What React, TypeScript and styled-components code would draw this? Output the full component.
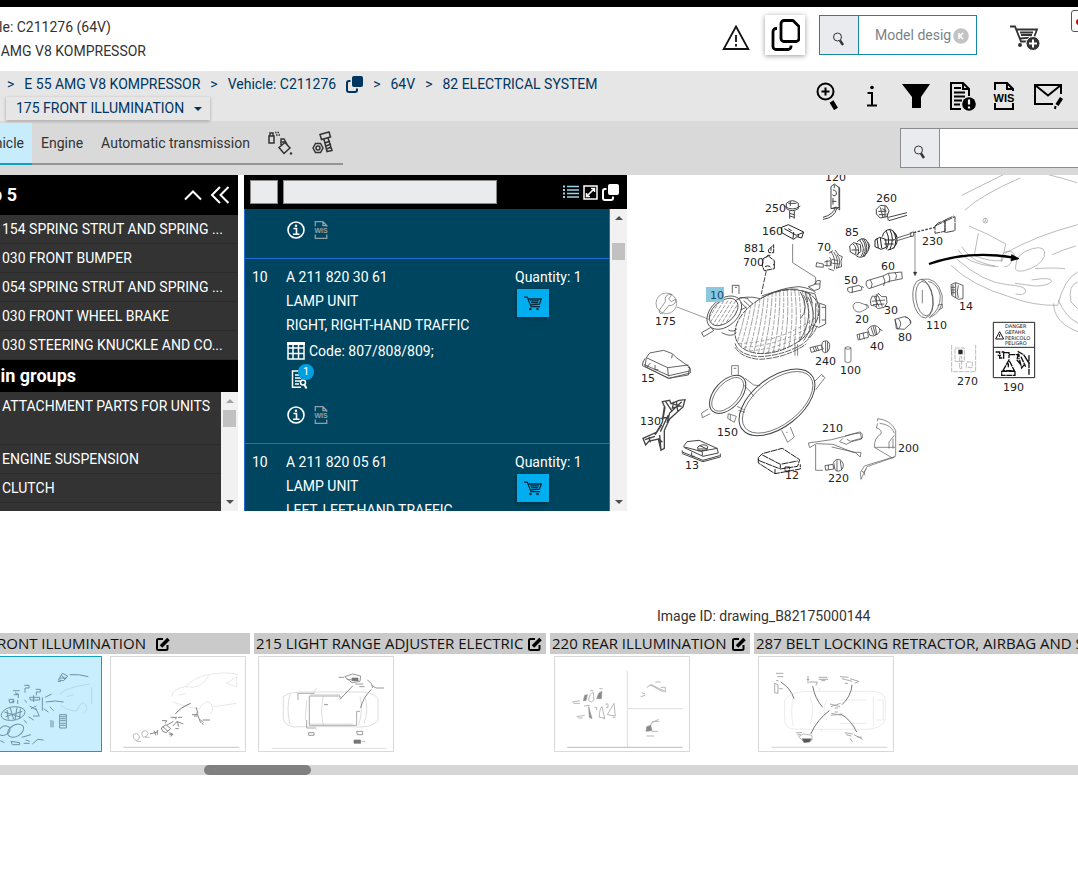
import React from "react";
import styled, { createGlobalStyle } from "styled-components";

const GlobalStyle = createGlobalStyle`
  * { box-sizing: border-box; }
  body {
    margin: 0;
    background: #fff;
    color: #333;
    font: 14px/24px Roboto, "Liberation Sans", sans-serif;
    overflow-x: hidden;
  }
  button, input { font: inherit; color: inherit; margin: 0; }
  button { border: 0; padding: 0; background: none; cursor: pointer; }
  svg { display: block; flex: none; }
  h2, p, ul { margin: 0; padding: 0; }
  ul { list-style: none; }
`;

const Page = styled.div`
  width: 100%;
  overflow: hidden;
`;

const TopStrip = styled.div`
  height: 7px;
  background: #000;
`;

const TailText = styled.span<{ $width: number }>`
  display: flex;
  justify-content: flex-end;
  flex: none;
  width: ${(p) => p.$width}px;
  overflow: hidden;
  white-space: nowrap;
`;

/* ---------- header ---------- */

const Header = styled.header`
  display: flex;
  justify-content: space-between;
  height: 64px;
`;

const VehicleInfo = styled.div`
  padding-top: 8px;
`;

const HeaderTools = styled.div`
  display: flex;
  align-items: flex-start;
  padding-top: 8px;
`;

const IconButton = styled.button<{ $width: number; $gap?: number; $height?: number }>`
  display: flex;
  align-items: center;
  justify-content: center;
  flex: none;
  width: ${(p) => p.$width}px;
  height: ${(p) => p.$height ?? 40}px;
  margin-right: ${(p) => p.$gap ?? 0}px;
`;

const RaisedButton = styled(IconButton)`
  background: #fff;
  color: #000;
  box-shadow: 0 1px 5px rgba(0, 0, 0, 0.4);
`;

const SearchGroup = styled.form<{ $accent: string; $width: string }>`
  display: flex;
  position: relative;
  flex: none;
  width: ${(p) => p.$width};
  height: 40px;
  border: 1px solid ${(p) => p.$accent};
  background: #fff;
`;

const SearchButton = styled.button<{ $accent: string }>`
  display: flex;
  align-items: center;
  justify-content: center;
  width: 39px;
  padding-top: 8px;
  border-right: 1px solid ${(p) => p.$accent};
  background: #e9ebef;
`;

const SearchInput = styled.input`
  flex: 1;
  min-width: 0;
  padding: 0 24px 0 16px;
  border: 0;
  outline: 0;
  background: transparent;
  &::placeholder { color: #7b8388; opacity: 1; }
`;

const ClearButton = styled.button`
  position: absolute;
  right: 7px;
  top: 12px;
`;

const EdgeBox = styled.button`
  display: flex;
  width: 20px;
  height: 22px;
  margin: -5px -13px 0 0;
  padding: 8px 0 0 4px;
  border: 1px solid #555;
  border-radius: 3px;
`;

const EdgeDot = styled.span`
  width: 6px;
  height: 6px;
  border-radius: 3px;
  background: #c00;
`;

/* ---------- breadcrumb ---------- */

const CrumbBar = styled.nav`
  display: flex;
  justify-content: space-between;
  height: 50px;
  background: #e6e6e6;
  color: #00355f;
`;

const CrumbRow = styled.div`
  display: flex;
  align-items: center;
  height: 26px;
  padding-left: 7px;
  gap: 10px;
`;

const CrumbLink = styled.a`
  color: inherit;
  text-decoration: none;
  white-space: nowrap;
`;

const GroupMenu = styled.button`
  display: flex;
  align-items: center;
  gap: 10px;
  height: 23px;
  margin-left: 6px;
  padding: 0 8px 2px 10px;
  box-shadow: 0 1px 3px rgba(0, 0, 0, 0.3);
`;

const MenuCaret = styled.span`
  margin-top: 2px;
  border: 4px solid transparent;
  border-bottom-width: 0;
  border-top-color: #00355f;
`;

const CrumbTools = styled.div`
  display: flex;
  align-items: center;
  flex: none;
  padding-right: 8px;
  color: #000;
`;

/* ---------- tabs ---------- */

const TabBar = styled.div`
  display: flex;
  justify-content: space-between;
  height: 54px;
  background: #d9d9d9;
`;

const Tabs = styled.div`
  display: flex;
  align-items: stretch;
  height: 42px;
  margin-top: 2px;
  border-bottom: 2px solid #949494;
`;

const Tab = styled.button<{ $active?: boolean }>`
  display: flex;
  align-items: center;
  padding: 0 9px 2px;
  margin-bottom: -2px;
  ${(p) => p.$active && `
    padding: 0 8px 0 0;
    background: #c7ecfc;
    border-bottom: 2px solid #149fcb;
  `}
`;

const TabSearch = styled.div`
  margin-top: 7px;
  flex: none;
  width: 178px;
`;

/* ---------- panels ---------- */

const Panels = styled.main`
  display: flex;
  align-items: flex-start;
`;

const GroupPanel = styled.aside`
  flex: none;
  width: 238px;
  height: 336px;
  margin-right: 6px;
  overflow: hidden;
  background: #333;
  color: #fff;
`;

const PanelHeading = styled.div<{ $height: number }>`
  display: flex;
  align-items: center;
  height: ${(p) => p.$height}px;
  padding-right: 6px;
  background: #000;
  h2 { font-size: 18px; line-height: 24px; font-weight: 700; flex: 1; }
`;

const GroupItem = styled.li<{ $lines?: number }>`
  height: ${(p) => (p.$lines === 2 ? 53 : 29)}px;
  padding: 2px 0 0 2px;
  border-bottom: 1px solid #2b2b2b;
  white-space: nowrap;
`;

const ScrollArea = styled.div<{ $height: number }>`
  display: flex;
  height: ${(p) => p.$height}px;
  overflow: hidden;
`;

const ScrollBody = styled.div`
  flex: 1;
  min-width: 0;
  overflow: hidden;
`;

const ScrollTrack = styled.div`
  display: flex;
  flex-direction: column;
  align-items: center;
  justify-content: space-between;
  flex: none;
  width: 17px;
  padding: 7px 0;
  background: #f1f1f1;
`;

const ScrollHandle = styled.div<{ $offset: number }>`
  width: 13px;
  height: 17px;
  margin: ${(p) => p.$offset}px 0 auto;
  background: #c1c1c1;
`;

const Arrow = styled.span<{ $down?: boolean; $faded?: boolean }>`
  border: 4px solid transparent;
  ${(p) => (p.$down ? "border-bottom-width: 0; border-top-color" : "border-top-width: 0; border-bottom-color")}:
    ${(p) => (p.$faded ? "#a3a3a3" : "#505050")};
`;

const PartsPanel = styled.section`
  flex: none;
  width: 383px;
`;

const PartsHeader = styled.div`
  display: flex;
  align-items: center;
  gap: 5px;
  height: 34px;
  padding: 0 8px 0 6px;
  background: #000;
  color: #fff;
`;

const FilterInput = styled.input<{ $width: number }>`
  flex: none;
  width: ${(p) => p.$width}px;
  height: 24px;
  border: 1px solid #8a8a8a;
  background: #e9ebed;
  color: #333;
`;

const HeaderIcons = styled.div`
  display: flex;
  align-items: center;
  gap: 4px;
  margin-left: auto;
`;

const PartRow = styled.article<{ $first?: boolean }>`
  display: grid;
  grid-template-columns: 34px 1fr 94px;
  height: ${(p) => (p.$first ? 50 : 185)}px;
  padding: ${(p) => (p.$first ? 9 : 6)}px 0 0 7px;
  border: 1px solid #1b6fd8;
  border-top: 0;
  background: #00455f;
  color: #fff;
`;

const IconLine = styled.div<{ $top?: number }>`
  display: flex;
  align-items: center;
  gap: 9px;
  height: 24px;
  margin-top: ${(p) => p.$top ?? 0}px;
  padding-left: 1px;
`;

const CodeLine = styled(IconLine)`
  gap: 4px;
`;

const NoteMark = styled.div`
  position: relative;
  width: 28px;
  height: 30px;
  margin: 0 0 0 5px;
  padding-top: 7px;
`;

const NoteCount = styled.span`
  position: absolute;
  left: 7px;
  top: 1px;
  width: 16px;
  height: 16px;
  border-radius: 8px;
  background: #00a0e0;
  font-size: 11px;
  line-height: 16px;
  text-align: center;
`;

const CartButton = styled.button`
  display: flex;
  align-items: center;
  justify-content: center;
  width: 32px;
  height: 28px;
  margin-left: 2px;
  background: #00adef;
  box-shadow: 0 1px 4px rgba(0, 0, 0, 0.4);
`;

const DrawingPanel = styled.section`
  flex: 1;
  min-width: 0;
  overflow: hidden;
`;

const ImageId = styled.p`
  margin: 0 0 5px 30px;
`;

/* ---------- drawing strip ---------- */

const Strip = styled.div`
  display: flex;
  gap: 4px;
`;

const StripGroup = styled.section<{ $width: number }>`
  flex: none;
  width: ${(p) => p.$width}px;
  overflow: hidden;
`;

const StripTitle = styled.h2<{ $tail?: boolean }>`
  display: flex;
  align-items: center;
  justify-content: ${(p) => (p.$tail ? "flex-start" : "space-between")};
  gap: ${(p) => (p.$tail ? 10 : 4)}px;
  height: 21px;
  padding: 0 4px 0 ${(p) => (p.$tail ? 0 : 2)}px;
  background: #cacaca;
  color: #111;
  font: 400 15px/21px "Open Sans", "Noto Sans", sans-serif;
  white-space: nowrap;
`;

const Thumbs = styled.div<{ $end?: boolean }>`
  display: flex;
  gap: 8px;
  padding: 2px 4px 0;
  justify-content: ${(p) => (p.$end ? "flex-end" : "flex-start")};
`;

const Thumb = styled.button<{ $active?: boolean }>`
  flex: none;
  width: 136px;
  height: 96px;
  border: 1px solid ${(p) => (p.$active ? "#149fcb" : "#d8d8d8")};
  background: ${(p) => (p.$active ? "#c9eefd" : "#fff")};
  overflow: hidden;
`;

const StripScroll = styled.div`
  height: 10px;
  margin-top: 13px;
  padding-left: 204px;
  background: #d6d6d6;
`;

const StripHandle = styled.div`
  width: 107px;
  height: 10px;
  border-radius: 5px;
  background: #808080;
`;

/* ---------- icons ---------- */

const Magnifier = () => (
  <svg width="14" height="16" viewBox="0 0 14 16" fill="none" stroke="#333">
    <circle cx="5.500" cy="6" r="4" />
    <path d="M8 9.500l3 4.500" strokeWidth="2.400" />
  </svg>
);

const Warning = () => (
  <svg width="28" height="26" viewBox="0 0 28 26" fill="none" stroke="#111" strokeWidth="1.800">
    <path d="M14 1.500L26.300 24H1.700z" />
    <path d="M14 10v7M14 19v2.500" />
  </svg>
);

const CopyOutline = () => (
  <svg width="30" height="34" viewBox="0 0 30 34" fill="none" stroke="#000" strokeWidth="2.800" strokeLinejoin="round">
    <path d="M14 2.500h9l6 6v12a3 3 0 0 1-3 3H14a3 3 0 0 1-3-3v-15a3 3 0 0 1 3-3z" />
    <path d="M7 10.500H6a3 3 0 0 0-3 3v15a3 3 0 0 0 3 3h12a3 3 0 0 0 3-3v-1" />
  </svg>
);

const CopySolid = () => (
  <svg width="17" height="17" viewBox="0 0 17 17" fill="currentColor">
    <rect x="6" y="0" width="11" height="11" rx="2" />
    <path d="M4.500 5H3a2 2 0 0 0-2 2v7a2 2 0 0 0 2 2h6a2 2 0 0 0 2-2v-1.500" fill="none" stroke="currentColor" strokeWidth="2" />
  </svg>
);

const Cart = ({ add }: { add?: boolean }) => (
  <svg width={add ? 31 : 18} height={add ? 26 : 15} viewBox={add ? "0 0 31 26" : "0 0 28 23"} fill="none" stroke={add ? "#333" : "#062a3a"} strokeWidth={add ? 1.8 : 2}>
    <path d="M0 1.500h5l6 15h14M6 4.500h21l-3 8-14 1M10 7.500h13M11 10h11" />
    <circle cx="10" cy="20" r="2" fill={add ? "#333" : "#062a3a"} stroke="none" />
    {add ? (
      <g>
        <circle cx="23" cy="18.500" r="7" fill="#333" stroke="#fff" strokeWidth="1" />
        <path d="M23 14.500v8M19 18.500h8" stroke="#fff" strokeWidth="2" />
      </g>
    ) : (
      <circle cx="21" cy="20" r="2" fill="#062a3a" stroke="none" />
    )}
  </svg>
);

const ZoomIn = () => (
  <svg width="24" height="28" viewBox="0 0 24 28" fill="none" stroke="#000" strokeWidth="2">
    <circle cx="9.500" cy="9.500" r="8" />
    <path d="M9.500 5.500v8M5.500 9.500h8" />
    <path d="M15.500 19.500l4.500 7.500" strokeWidth="4.500" />
  </svg>
);

const InfoLetter = () => (
  <svg width="12" height="22" viewBox="0 0 12 22" fill="none" stroke="#000" strokeWidth="2">
    <path d="M1.500 8H6v12M1 20.500h10" />
    <circle cx="6" cy="2.500" r="1.800" fill="#000" stroke="none" />
  </svg>
);

const Funnel = () => (
  <svg width="28" height="24" viewBox="0 0 28 24"><path d="M0 0h28L19 13v11h-9V13z" /></svg>
);

const DocAlert = () => (
  <svg width="28" height="30" viewBox="0 0 28 30" fill="none" stroke="#000" strokeWidth="2">
    <path d="M13 28H3V2h12l6 6v7M15 2v6h6M6 7h7M6 11.500h11M6 15.500h11M6 19.500h8M6 23.500h6" />
    <circle cx="21" cy="23" r="6.800" fill="#000" stroke="none" />
    <path d="M21 18.500v5M21 25.500v2" stroke="#fff" strokeWidth="2.200" />
  </svg>
);

const Wis = ({ small }: { small?: boolean }) => (
  <svg width={small ? 14 : 22} height={small ? 18 : 28} viewBox="0 0 22 28" fill="none" stroke={small ? "#8fa0a8" : "#000"} strokeWidth="2">
    <path d="M2 8V1h12l6 6v2M14 1v6h6M2 21v6h18v-6" />
    <text x="11" y="19.500" textAnchor="middle" fontSize="11" fontWeight="700" fontFamily="Liberation Sans, sans-serif" fill={small ? "#8fa0a8" : "#000"} stroke="none">WIS</text>
  </svg>
);

const MailEdit = () => (
  <svg width="31" height="27" viewBox="0 0 31 27" fill="none" stroke="#000" strokeWidth="2">
    <path d="M20 21H2V2h26v9M2 2l13 10.500L28 2" />
    <path d="M28.500 15l-4.500 7" strokeWidth="3.600" />
    <path d="M22.500 23l-.5 3" />
  </svg>
);

const FluidIcon = () => (
  <svg width="26" height="25" viewBox="0 0 26 25" fill="none" stroke="#333" strokeWidth="1.500">
    <path d="M1 5h5v7H1zM2 5V2h3v3" />
    <path d="M7 1.500h5M8 4h5" strokeDasharray="1.500 1" />
    <path d="M11 16.500l6-5 5 5.500-6 5.500zM13 14V8h3l4 7M13 11h4" />
    <circle cx="23" cy="22.500" r="1.200" fill="#333" stroke="none" />
  </svg>
);

const BoltIcon = () => (
  <svg width="22" height="24" viewBox="0 0 22 24" fill="none" stroke="#333" strokeWidth="1.500">
    <path d="M8 3.500l9-2.500 1.500 5-9 2.500zM12 8.500l3 12 5-1-4-12.500M13 12l5-2M14 15l5-2M14.500 18l5-2" />
    <path d="M1 17l2.500-4.500h5L11 17l-2.500 4.500h-5z" />
    <circle cx="6" cy="17" r="2" />
  </svg>
);

const InfoCircle = () => (
  <svg width="18" height="18" viewBox="0 0 18 18" fill="none" stroke="#fff" strokeWidth="1.600">
    <circle cx="9" cy="9" r="8" />
    <path d="M6.500 7.500H9.500v5.500M6 13.300h6.500" />
    <circle cx="9" cy="4.700" r="1.200" fill="#fff" stroke="none" />
  </svg>
);

const TableIcon = () => (
  <svg width="18" height="18" viewBox="0 0 18 18" fill="none" stroke="#fff" strokeWidth="1.500">
    <path d="M1 1h16v16H1zM1 6h16M1 11.500h16M6 1v16M11.500 1v16" />
    <path d="M0 1.500h18" strokeWidth="3" />
  </svg>
);

const NoteIcon = () => (
  <svg width="18" height="19" viewBox="0 0 18 19" fill="none" stroke="#fff" strokeWidth="1.500">
    <path d="M10 17.200H1.500V1H12v7M4 5h7M4 8h6M4 11h5M4 14h4" />
    <circle cx="12" cy="12.500" r="2.500" />
    <path d="M13.500 15l2 3.500" strokeWidth="2" />
  </svg>
);

const EditIcon = () => (
  <svg width="14" height="14" viewBox="0 0 14 14" fill="none" stroke="#000" strokeWidth="2">
    <path d="M7 2H2.500Q1 2 1 3.500v8Q1 13 2.500 13H10q1.500 0 1.500-1.500V8" />
    <path d="M5 9.500L12.500 2" strokeWidth="3.500" />
  </svg>
);

/* ---------- exploded drawing ---------- */

const labels: [string, number, number][] = [
  ["120", 825, 181], ["250", 765, 212], ["160", 762, 235], ["881", 744, 252], ["700", 743, 266],
  ["70", 817, 251], ["175", 655, 325], ["85", 845, 236], ["260", 876, 202], ["230", 922, 245],
  ["60", 881, 270], ["50", 844, 284], ["30", 884, 314], ["20", 855, 323], ["110", 926, 329],
  ["14", 959, 310], ["80", 898, 341], ["40", 870, 350], ["240", 815, 365], ["100", 840, 374],
  ["15", 641, 382], ["130", 640, 425], ["150", 717, 436], ["13", 685, 469], ["12", 785, 479],
  ["210", 822, 432], ["220", 828, 482], ["200", 898, 452], ["270", 957, 385], ["190", 1003, 391],
];

const range = (n: number) => Array.from({ length: n }, (_, i) => i);

const Headlamp = () => (
  <g stroke="#444" strokeWidth="2.500">
    <clipPath id="large-lens">
      <ellipse cx="456" cy="455" rx="134" ry="84" transform="rotate(-26 456 455)" />
    </clipPath>
    <clipPath id="small-lens">
      <ellipse cx="296" cy="426" rx="50" ry="32" transform="rotate(-42 296 426)" />
    </clipPath>
    <g clipPath="url(#large-lens)" stroke="#777" strokeWidth="2">
      {range(21).map((i) => (
        <path key={i} d={`M${316 + i * 15} 580q${40 - i} -110 ${60 - i * 4} -230`} strokeDasharray={i % 2 ? "13 4" : "26 3"} />
      ))}
      {range(5).map((i) => (
        <path key={i} d={`M340 ${520 + i * 12}q130 0 250 ${-90 + i * 6}`} strokeDasharray="10 7" />
      ))}
    </g>
    <g clipPath="url(#small-lens)" stroke="#666" strokeWidth="2">
      {range(8).map((i) => (
        <path key={i} d={`M${236 + i * 12} 470l50-80`} strokeDasharray="12 4" />
      ))}
    </g>
    <ellipse cx="296" cy="426" rx="50" ry="32" transform="rotate(-42 296 426)" />
    <ellipse cx="298" cy="428" rx="60" ry="40" transform="rotate(-42 298 428)" />
    <ellipse cx="456" cy="455" rx="134" ry="84" transform="rotate(-26 456 455)" strokeDasharray="20 3" />
    <path d="M330 392q30-18 76-6 60-34 116-36 34 4 50 18M342 384q10-4 28 2M346 396l20 20M356 392l18 16M368 388l16 14M346 420l18-8M410 378q70-26 110-20" />
    <path d="M330 520q10 34 70 40 70-2 130-36 34-24 46-56M330 532q20 32 74 36 80-4 140-46" strokeDasharray="18 3" />
    <path d="M230 488l28-16 8 10-30 18zM322 370v-24h20v26M330 352h6M290 488q30 16 44 0M310 480q16 8 26-4" />
    <path d="M530 362l40 10 8 26 24 8v56l-20 10-24-8M572 400v60M584 402v58M550 350l18-6 8-12h10l-2 24-16 6zM568 342h16M540 366l8 30M552 370l10 30M566 470q-4 20-16 34M590 412h12M590 450h12" />
    <path d="M536 376q36 60-14 140M548 380q38 60-12 132M526 366q30 50 0 80" />
  </g>
);

const ExplodedDrawing = () => (
  <svg width="451" height="429" viewBox="627 175 451 429" fill="none" stroke="#444" strokeWidth="2.500" role="img" aria-label="Front illumination">
    <g transform="translate(625 170) scale(.3333)">
      <Headlamp />
      <path d="M503 222v56l69 44v22" strokeWidth="2" />
      <path d="M424 302l-15 70" strokeWidth="3" strokeDasharray="16 4" />
      {/* wrench badge */}
      <circle cx="124" cy="400" r="31" stroke="#777" strokeWidth="2" />
      <path d="M156 411l98 38M103 421l18-26q-4-24 20-22l-10 14 8 8 14-8q0 20-22 20l-17 21q-12 8-11-7z" stroke="#666" strokeWidth="2" />
      {/* bolt, bracket, clips */}
      <path d="M484 100q18-16 36 0v16q-18 12-36 0zM478 108q24 18 48 0M494 122v24M508 122v24M494 130l14 4M494 138l14 4M490 100h24M496 94v14" strokeWidth="3" />
      <path d="M470 172l20-8 46 22-6 18-14-4-10 8-36-20zM478 176l36 20 20-8M490 176l10 6M506 186l-2 20M520 192v8" stroke="#222" strokeWidth="3" />
      <path d="M430 240l16-16v24h-14zM438 232v10M414 266l16-8 18 14v24l-30 6-6-14zM420 290q10-6 18 2M424 262l4-6h8M444 284h6" stroke="#222" strokeWidth="3" strokeDasharray="16 2" />
      <path d="M618 50l10-8 16 12v66l-10-8-16 4zM624 60q12 0 10 14-8 8-12 0M618 116l26-4M632 110q-6 24-38 32M636 114q-8 30-42 34M642 50v60M624 84v20M622 94h12M628 44v10" strokeWidth="3" />
      <path d="M575 278l20 4v10l-22-2zM598 276l18-4v16l-18-2M618 244q16 24 10 54M626 246q18 22 8 50M636 254q14 16 4 40M614 262q10 10 4 26M630 240l12 16 10 4-4 14 2 16-16 4M612 250l12-8M610 296l16 6M606 270v20M620 268l20 4M622 280l20 2" />
    </g>
    <g transform="translate(845 170) scale(.3333)">
      {/* bulb holders and connector */}
      <path d="M94 118l12-12 18 2 8 14-6 18-20 4-12-12zM100 124h24M106 112l8 30M120 108v34M102 134h20M112 116l12 6M130 142l56-14M132 152l54-16M126 130l4 22" strokeWidth="3" />
      <path d="M14 228l12-10 20 6 2 20-14 12-18-10zM24 222q12 8 8 30M36 216q14-16 28-6 14 20 0 42-14 16-30 6M44 210q20 26 4 50M56 206q18 26 2 54M68 216l6 10-4 16M20 240h20M32 220q14 14 6 36M50 206q20 24 4 54" strokeWidth="3" />
      <path d="M90 210l14-8 18 6 2 24-16 6-18-8zM96 206l4 28M106 204l4 30M112 200q4-20 24-22 22 10 20 38-6 22-28 24M124 184q14 28 0 54M134 178q16 28 0 62M144 182q16 26 2 54M150 190l6 10M118 210h30M118 222h28" strokeWidth="3" stroke="#222" />
      <path d="M156 204l44-14M156 212l46-14M196 188l10-2v12l-8 2zM150 208l-10 4" />
      <path d="M206 188l64-16" strokeWidth="4" strokeDasharray="8 4" />
      <path d="M270 168l30-14v30l-30 6zM300 154l30-14v42l-30 6zM270 168l8-8 24-10M300 150l26-12" stroke="#222" strokeDasharray="24 2" />
      <path d="M210 190v122" stroke="#777" />
      <path d="M205 306l5 12 6-12z" fill="#333" strokeWidth="1" />
      <path d="M8 354l34-8q12 4 8 14l-34 8q-12-4-8-14zM22 350v18M50 348l6 6M66 332l48-14 16-8 40-4 2 20-40 8-14 6-46 16q-14-10-6-24zM76 330q10 12 2 24M114 318q10 14 2 30M130 310q8 14 2 28M150 308q8 8 2 20" />
      <path d="M24 408q4-14 20-10l22 8v10l-20 10q-20 2-22-18zM60 404q12-2 10 10" strokeWidth="2" />
      <path d="M76 392l6-14 14 2 4-10 10 10 14 0 2 18-8 14-20 4-8-8-12-2zM88 380l14 30M100 378l12 32M80 394l40-4M84 404l34-2M94 372v40" />
      <path d="M36 494l32-8 2 16-30 8zM44 492v16M54 488l4 20M68 478q14-18 30-8 14 10 0 22-14 10-24 4zM78 472l8 24M84 468l8 28M90 468l6 26M102 476l10 6" />
      <path d="M150 448l28-8q20 4 20 20l-20 18-24-2zM160 446q14 14 0 32M180 440q18 6 16 20M150 448l8 30" />
      <ellipse cx="234" cy="386" rx="30" ry="58" transform="rotate(-8 234 386)" strokeWidth="2" />
      <ellipse cx="238" cy="386" rx="25" ry="52" transform="rotate(-8 238 386)" strokeWidth="2" />
      <path d="M228 328q50-10 64 50 4 48-40 66M250 334q30 8 36 44 0 40-30 62M278 406l14-4v12l-12 6M232 360v40" strokeWidth="2" />
      <path d="M318 344l14-6 22 8v40l-14 2-20-12zM332 338v46M340 346q-6 20 0 38M318 352h12M318 360h12M318 368h12M324 344v32" />
      {/* car front */}
      <g stroke="#999" strokeWidth="2">
        <path d="M350 76L475 14M360 120q50-46 166-96M610 14q50 12 86 24M372 168q60 24 110 54l-10 50q-40 4-84-16l12-66M480 250q90-52 218-86M622 254q30-14 70-26M512 290q0-40 50-54 44-12 36 24-14 30-60 42-30 6-26-12z" />
        <path d="M470 276q-6-24 16-32 22 0 22 12-12 36-30 34M350 230q20 30 50 44 30 12 60 16M340 240q20 40 110 50M336 268q80 70 150 76 60 4 56 20-4 14-30 8M318 286q60 60 180 96 70 26 140 24 20-80 60-100M560 330q60-10 60 4-10 14-50 14l-60-8M626 400q0 60 80 88M640 390q20 50 60 70M698 336q-30 10-20 60l20 20M570 296q60-4 90 0" />
        <circle cx="421" cy="152" r="7" /><path d="M421 145v8l-5 5M421 153l5 5" />
      </g>
      <path d="M252 282q120-42 250-20" stroke="#000" strokeWidth="7" />
      <path d="M500 254l22 12-24 6z" fill="#000" stroke="#000" />
    </g>
    <g transform="translate(625 335) scale(.3333)">
      {/* control units */}
      <path d="M64 68l10-14 42-8 26 10 12 12 40 28-4 24-60 10-70-36zM64 68l64 30 2 26M128 98l62-8M54 80l-2 12 80 38 64-16v-14l-8-4M60 70l-6 12M76 84l-10 12M90 90v14h10M142 58l-2 12M56 88l76 34 62-14" />
      <path d="M176 334l10-14 36-4 54 24 4 14-46 10-56-26zM232 348l46-8M178 336l54 14v12M172 346v10l62 24 52-14v-10M174 352l60 24 50-14M218 336q16-12 30-2l-2 12-26 2zM220 342h26M200 352v12h10M224 332l22 10" strokeWidth="3" />
      <path d="M400 368l12-12 60-16 52 34-6 20-52 8-66-26zM400 372v12l50 32 76-14v-14M450 402v14M412 360l54 28 52-10M466 390v10M480 396h14v12h-14z" stroke="#222" strokeWidth="3" strokeDasharray="20 2" />
      {/* bracket */}
      <path d="M112 200l22-4 4 10 24-10 18-2-6 22-40 36-16 34v54l-10 6-8-34-28 6-10 12-8-20 40-18 18-30 8-44zM122 200l20 30M170 200l-36 34 -8 30M130 240l-24 50M106 250l24-4M90 300l20-30M104 300l4 46M118 216l-6 40M140 206l30 8M60 314l30-10M140 220l26-8M146 200l-4 20M154 198l4 30M72 306l4 16M100 310l12 12" strokeWidth="4" />
      {/* frame */}
      <g strokeWidth="3">
        <ellipse cx="308" cy="178" rx="68" ry="40" transform="rotate(-48 308 178)" />
        <ellipse cx="308" cy="178" rx="61" ry="33" transform="rotate(-48 308 178)" strokeWidth="2" />
        <ellipse cx="456" cy="202" rx="132" ry="74" transform="rotate(-38 456 202)" />
        <ellipse cx="458" cy="202" rx="124" ry="66" transform="rotate(-38 458 202)" strokeWidth="2" />
      </g>
      <path d="M320 120V92h20v30M326 100h8M250 222l-20 12 2 14 24-12M360 130l26 20 20 2M356 150l20 20 10 14M340 226l20 6M336 214l20 10M310 236l24 8-6 18-20-12zM316 238v18M570 138l20-20 10 10-28 36M592 124h4M470 286l18 36 20-16-12-30M484 292h4" strokeWidth="2" />
      <path d="M510 28v34M518 28v34" strokeWidth="2" />
      <path d="M555 38l34-8 6 12-36 10zM564 36l6 14M576 34l6 14M570 34l6 14M592 22q16-12 22 6 2 20-14 26-14-4-8-32zM602 18v34M608 20v32" />
      <path d="M660 38v42q8 6 18 0V38q-10-6-18 0zM660 40q10 6 18 0" strokeWidth="2" />
      <path d="M550 324l70-10 70-18 16-2 4 18-30 8-16 8-20-8 10-10M550 324l4 14 20-12 50 2 60 24 24 0-2 14-16-14-70-16M572 330v76h22" strokeWidth="2" />
      <path d="M600 392l24-4 2 14-24 4zM610 390v14M626 382q8-14 22-6 12 12 4 26-12 12-22 2zM636 376v32M646 378l4 28" />
    </g>
    <g transform="translate(845 310) scale(.3333)" strokeWidth="2">
      <path d="M98 334v-8q40 4 54 36v74l-10 8-54-32q0-30 20-40 4-14-14-18l4-14M104 340q36 4 44 30M90 412l60 0M152 440l-86 30-18 38-2-20 12-20 84-26M132 396v20M132 396l16-20M144 386v30M56 488l8-12M50 484q10 0 10 12" stroke="#555" />
      <path d="M0 378l44-12q10 2 8 18l-36 10-10-6" />
      {/* fuse label and danger sticker */}
      <path d="M320 105v80h72v-80M330 114h28v40h-28zM364 156h18v16h-18zM344 140h6v36h-6z" stroke="#999" strokeDasharray="14 3" />
      <path d="M341 120h11v12h-11z" fill="#222" />
      <path d="M445 37h124v166H445zM445 112h124" stroke="#222" strokeWidth="3" />
      <path d="M452 87l12-22 12 22zM464 73v8" stroke="#111" strokeWidth="3" />
      <path d="M452 126h12v18h12v-16h16v16M492 134h30v14M518 124l18 10 18 28M524 150l6 24 8-10M540 140l12 20M552 136v58M470 184h40v12h-40zM474 182l18-32 16 32zM490 160v12M458 136h10M470 126h8M520 130l-4 20 10 12M528 140l14 30" stroke="#111" strokeWidth="4" strokeDasharray="18 2" />
    </g>
    <rect x="706" y="287" width="18" height="15" fill="#8cc7e0" stroke="none" />
    <g fill="#222" stroke="none" fontFamily="DejaVu Sans, sans-serif" fontSize="11">
      {labels.map(([t, x, y]) => <text key={t} x={x} y={y}>{t}</text>)}
      <text x="710" y="299" fill="#12506b">10</text>
    </g>
    <g fill="#111" stroke="none" fontFamily="DejaVu Sans, sans-serif" fontSize="5">
      <text x="1005" y="328">DANGER</text>
      <text x="1005" y="334">GEFAHR</text>
      <text x="1005" y="340">PERICOLO</text>
      <text x="1005" y="345">PELIGRO</text>
    </g>
  </svg>
);

/* ---------- thumbnails ---------- */

const ThumbSvg = ({ box, children }: { box: string; children: React.ReactNode }) => (
  <svg width="134" height="94" viewBox={box} fill="none" stroke="#999" strokeWidth="2">{children}</svg>
);

const FrontThumb = () => (
  <ThumbSvg box="-100 171 402 282">
    <g stroke="#6f939f">
      <path d="M4 340q10-20 44-20 34 4 24 24-20 22-54 16-20-6-14-20zM12 336l50 16M16 350l50-16M30 324l10 34M50 322l-6 38M20 330l4 28M60 326l-2 30" strokeWidth="3" />
      <ellipse cx="12" cy="392" rx="18" ry="13" transform="rotate(-30 12 392)" strokeWidth="3" />
      <ellipse cx="46" cy="392" rx="26" ry="17" transform="rotate(-30 46 392)" strokeWidth="3" />
      <path d="M38 272h20M44 278l10 4v12M40 284h14M72 256h14v8h-12v14M106 268h14v8h-12v10M26 298h14v10h-12zM34 304h8M52 300v12M88 292h30v8H90zM100 286v20M126 292v40M134 292l20-10M72 300l8 8M88 318l20 12M92 326l16-8M106 324l10 22M130 326l14 10M148 320l12 12M98 348h20M84 350l16 10M70 360l10 10M152 360v22M158 362v20M0 422l12 6M32 424l26 4v6H36zM64 412l28-8M70 430h18M76 420l12 4M96 432l16-14 18 2M174 240l12-20 16 8-12 14zM178 234h20M184 226l10 12M172 244h10" strokeWidth="3" />
      <path d="M178 344h20v40h-20zM180 350h16M180 356h16M180 362h16M180 370h16M180 376h16" strokeWidth="3" />
      <path d="M208 224q30-2 56 6M136 306q30-6 54 0" strokeWidth="3" />
      <path d="M178 282q20-20 90-30M180 316q30 20 50 16 10-24 20-24 20 20 0 30M274 262v50M200 290l20-6" stroke="#a9cfdb" />
    </g>
  </ThumbSvg>
);

const BumperThumb = () => (
  <ThumbSvg box="333 171 402 282">
    <g stroke="#ddd"><path d="M516 290q0-24 40-30 30-30 70-36 50-10 88 0M520 306q50 20 80 20 10-24 30-18 16 20 0 34M556 260q50 10 70-34M640 320l70-10M680 250l30-20v30zM536 286l20-6" /></g>
    <path d="M526 342q16-20 46-32" stroke="#777" strokeWidth="3" />
    <path d="M400 404q10-8 18 4 2 10-8 14-12-4-10-18zM426 396q14-10 18 4-2 12-14 12-6-6-4-16zM410 424h14M436 412h12" strokeWidth="2" />
    <path d="M450 402l22-6M462 392l6 14M472 390v14M484 384l14-10 14 12-14 12-10-4zM488 380l16 14M486 362h14l-4 8M500 376l20-12M506 398l12 4-6 8M508 404h12M518 378l14-14 4 16M530 364l20 8M526 386h10M512 352h18l-4 6M534 352h12M576 344h16M582 348h10M590 338l12 30M588 322l6 18M604 368l6 6M608 360l22 0M600 358l10 10" stroke="#888" strokeWidth="3" />
    <path d="M370 442h348" stroke="#aaa" />
  </ThumbSvg>
);

const RangeThumb = () => (
  <ThumbSvg box="777 171 402 282">
    <g stroke="#ccc"><path d="M850 290q20-16 70-14h140q60-4 74 20v66q-20 24-80 18H900q-40 6-50-22zM870 284q-12 40 0 90M920 300l-4 60M970 290q-10 40 0 86M1080 290q10 40-4 86M1094 290q14 40-2 80M950 264l-10 14M950 390l-6-12M890 280v-4M930 284h90M930 372h130" /></g>
    <path d="M894 300v-20h50M920 360v24h26M928 288v88h142v-42h10M928 288h92v8" stroke="#aaa" strokeWidth="3" />
    <path d="M1020 298l38-40M1082 324q6-30 32-56" stroke="#888" strokeWidth="3" />
    <path d="M1034 230l24-8 24 6-2 16-24 4zM1016 232h16M1040 238l36 4M1066 252h24M1078 260h16M1102 240l12 10 4 14M1116 256l12 8h24M972 314h12M926 398h16v8h-16zM1070 394h18v10h-16z" strokeWidth="3" />
    <path d="M1062 420h20v10h-20zM1056 234h18v8h-18z" fill="#777" stroke="#777" />
    <path d="M1086 425h10" /><path d="M816 445h344" stroke="#ccc" />
  </ThumbSvg>
);

const RearThumb = () => (
  <ThumbSvg box="465 171 402 282">
    <path d="M682 212v230M684 326h166" stroke="#ccc" />
    <path d="M502 442h346" stroke="#999" />
    <g stroke="#aaa" strokeWidth="2.500">
      <path d="M516 306l24-4M520 310l20 0M530 350l24-4M534 354h14M566 302q2-24 14-24l2 22-8 6zM570 272h10M598 266h10M616 312h8v10h-6M584 322h6v8M598 352q0-26 8-32l8 34zM622 344l20-34 4 38zM638 352h8M722 290l14-4M726 278l10 4M740 262l14-8 44 22M750 254l40 22M782 262h14v12M766 246h16M748 384l10-20h20M756 368l20-10M740 408h22M756 394h18M610 356l6 0" />
    </g>
    <path d="M550 302l4-16 8-2-4 18zM590 296l6-16 10-6-2 22zM566 320l10 36-8-4zM552 318l18-2M740 380l12-4 4 16-18 2z" fill="#888" />
  </ThumbSvg>
);

const BeltThumb = () => (
  <ThumbSvg box="57 171 402 282">
    <g stroke="#e2e2e2"><path d="M134 300q20-30 100-26h160q44 0 42 30v54q-10 30-60 30H170q-40 0-36-36zM160 290q-10 40 0 90M210 290q16 40 0 84M260 300q-16 30 0 60M400 290v90M240 264l-4 12M244 396v-10M410 300h20v60h-20M300 300h80M300 370h80" /></g>
    <path d="M122 246q30 18 40 50M218 258q6 36 30 64M336 254q-2 34-30 60M268 332q-36 26-56 70M302 342q30 16 48 54" stroke="#777" strokeWidth="3" />
    <path d="M108 220h22M112 230h18M104 250l10 4v26l-10-2zM108 242h8M118 266h10M204 228v22M200 238h8M208 246h24l-4 10M236 238h28M236 232h26M244 242h12M300 230l26 2M306 236l30 8M314 250h10M330 236l26 8-12 6M270 312l30 8M272 320l30-10M284 324h10M272 346l34-4M274 340l30 6M284 336h10M168 398h18M172 404h10M314 398l24 4M318 404l16 4M330 416l8 10M342 404l26 14M350 410l16 2" strokeWidth="2.500" />
    <path d="M176 410l14-8 26 4v14l-22 8z" /><path d="M186 416h28l-4 10-18 2z" fill="#555" />
    <path d="M94 442h348" stroke="#bbb" />
  </ThumbSvg>
);

/* ---------- content ---------- */

const topItems = [
  "154 SPRING STRUT AND SPRING ...",
  "030 FRONT BUMPER",
  "054 SPRING STRUT AND SPRING ...",
  "030 FRONT WHEEL BRAKE",
  "030 STEERING KNUCKLE AND CO...",
];

const Scrollbar = ({ offset, atTop }: { offset: number; atTop?: boolean }) => (
  <ScrollTrack aria-hidden="true">
    <Arrow $faded={atTop} />
    <ScrollHandle $offset={offset} />
    <Arrow $down />
  </ScrollTrack>
);

const Part = ({ number, side, code }: { number: string; side: string; code?: string }) => (
  <PartRow>
    <span>10</span>
    <div>
      <p>{number}</p>
      <p>LAMP UNIT</p>
      <p>{side}</p>
      <CodeLine $top={2}><TableIcon />{code}</CodeLine>
      <NoteMark><NoteIcon /><NoteCount>1</NoteCount></NoteMark>
      <IconLine $top={10}><InfoCircle /><Wis small /></IconLine>
    </div>
    <div>
      <p>Quantity: 1</p>
      <CartButton aria-label="Add to cart"><Cart /></CartButton>
    </div>
  </PartRow>
);

export default function App() {
  return (
    <Page>
      <GlobalStyle />
      <TopStrip />
      <Header>
        <VehicleInfo>
          <TailText $width={111}>Vehicle: C211276 (64V)</TailText>
          <TailText $width={146}>E 55 AMG V8 KOMPRESSOR</TailText>
        </VehicleInfo>
        <HeaderTools>
          <IconButton $width={28} $gap={15} $height={46} aria-label="Warnings"><Warning /></IconButton>
          <RaisedButton $width={40} $gap={14} aria-label="Copy"><CopyOutline /></RaisedButton>
          <SearchGroup $accent="#1687a7" $width="158px">
            <SearchButton type="button" $accent="#1687a7" aria-label="Search model"><Magnifier /></SearchButton>
            <SearchInput placeholder="Model designation" aria-label="Model designation" />
            <ClearButton type="button" aria-label="Clear">
              <svg width="16" height="16" viewBox="0 0 16 16">
                <circle cx="8" cy="8" r="7.800" fill="#c4c4c4" />
                <path d="M6 5v6M10 5L7 8l3 3" fill="none" stroke="#fff" strokeWidth="1.500" />
              </svg>
            </ClearButton>
          </SearchGroup>
          <IconButton $width={97} $gap={-3} $height={46} aria-label="Cart"><Cart add /></IconButton>
          <EdgeBox aria-label="Notifications"><EdgeDot /></EdgeBox>
        </HeaderTools>
      </Header>

      <CrumbBar>
        <div>
          <CrumbRow>
            <span>&gt;</span>
            <CrumbLink href="#model">E 55 AMG V8 KOMPRESSOR</CrumbLink>
            <span>&gt;</span>
            <CrumbLink href="#vehicle">Vehicle: C211276</CrumbLink>
            <CopySolid />
            <span>&gt;</span>
            <CrumbLink href="#64v">64V</CrumbLink>
            <span>&gt;</span>
            <CrumbLink href="#82">82 ELECTRICAL SYSTEM</CrumbLink>
          </CrumbRow>
          <GroupMenu>175 FRONT ILLUMINATION<MenuCaret /></GroupMenu>
        </div>
        <CrumbTools>
          <IconButton $width={24} $gap={26} aria-label="Zoom in"><ZoomIn /></IconButton>
          <IconButton $width={12} $gap={24} aria-label="Information"><InfoLetter /></IconButton>
          <IconButton $width={28} $gap={18} aria-label="Filter"><Funnel /></IconButton>
          <IconButton $width={28} $gap={17} aria-label="Notes"><DocAlert /></IconButton>
          <IconButton $width={22} $gap={18} aria-label="WIS"><Wis /></IconButton>
          <IconButton $width={31} $gap={6} aria-label="Message"><MailEdit /></IconButton>
        </CrumbTools>
      </CrumbBar>

      <TabBar>
        <Tabs>
          <Tab $active><TailText $width={24}>Vehicle</TailText></Tab>
          <Tab>Engine</Tab>
          <Tab>Automatic transmission</Tab>
          <Tab aria-label="Fluids"><FluidIcon /></Tab>
          <Tab aria-label="Standard parts"><BoltIcon /></Tab>
        </Tabs>
        <TabSearch>
          <SearchGroup $accent="#8c8c8c" $width="300px">
            <SearchButton type="button" $accent="#8c8c8c" aria-label="Search"><Magnifier /></SearchButton>
            <SearchInput aria-label="Search parts" />
          </SearchGroup>
        </TabSearch>
      </TabBar>

      <Panels>
        <GroupPanel>
          <PanelHeading $height={40}>
            <h2><TailText $width={17}>Top 5</TailText></h2>
            <IconButton $width={22} $gap={4} aria-label="Collapse">
              <svg width="18" height="12" viewBox="0 0 18 12" fill="none" stroke="#fff" strokeWidth="2"><path d="M1 10.500l8-8 8 8" /></svg>
            </IconButton>
            <IconButton $width={24} aria-label="Hide panel">
              <svg width="20" height="18" viewBox="0 0 20 18" fill="none" stroke="#fff" strokeWidth="2"><path d="M10 1L2 9l8 8M18.500 1l-8 8 8 8" /></svg>
            </IconButton>
          </PanelHeading>
          <ul>
            {topItems.map((t) => <GroupItem key={t}>{t}</GroupItem>)}
          </ul>
          <PanelHeading $height={32}>
            <h2><TailText $width={76}>Main groups</TailText></h2>
          </PanelHeading>
          <ScrollArea $height={119}>
            <ScrollBody>
              <ul>
                <GroupItem $lines={2}>ATTACHMENT PARTS FOR UNITS</GroupItem>
                <GroupItem>ENGINE SUSPENSION</GroupItem>
                <GroupItem>CLUTCH</GroupItem>
              </ul>
            </ScrollBody>
            <Scrollbar offset={7} atTop />
          </ScrollArea>
        </GroupPanel>

        <PartsPanel>
          <PartsHeader>
            <FilterInput $width={28} aria-label="Position filter" />
            <FilterInput $width={214} aria-label="Part filter" />
            <HeaderIcons>
              <svg width="16" height="14" viewBox="0 0 16 14" fill="none" stroke="#9cd3e8" strokeWidth="1.500">
                <path d="M4 1.500h12M4 5h12M4 8.500h12M4 12h12" />
                <path d="M0 1.500h2M0 5h2M0 8.500h2M0 12h2" strokeWidth="2" />
              </svg>
              <svg width="15" height="15" viewBox="0 0 15 15" fill="none" stroke="#fff" strokeWidth="1.500">
                <path d="M1 1h13v13H1zM4 11l7-7M8 3.500h3.500V7M3.500 8v3.500H7" />
              </svg>
              <CopySolid />
            </HeaderIcons>
          </PartsHeader>
          <ScrollArea $height={302}>
            <ScrollBody>
              <PartRow $first>
                <span />
                <IconLine><InfoCircle /><Wis small /></IconLine>
              </PartRow>
              <Part number="A 211 820 30 61" side="RIGHT, RIGHT-HAND TRAFFIC" code="Code: 807/808/809;" />
              <Part number="A 211 820 05 61" side="LEFT, LEFT-HAND TRAFFIC" />
            </ScrollBody>
            <Scrollbar offset={23} />
          </ScrollArea>
        </PartsPanel>

        <DrawingPanel>
          <ExplodedDrawing />
          <ImageId>Image ID: drawing_B82175000144</ImageId>
        </DrawingPanel>
      </Panels>

      <Strip>
        <StripGroup $width={250}>
          <StripTitle $tail><TailText $width={146}>175 FRONT ILLUMINATION</TailText><EditIcon /></StripTitle>
          <Thumbs $end>
            <Thumb $active aria-label="Front illumination 1"><FrontThumb /></Thumb>
            <Thumb aria-label="Front illumination 2"><BumperThumb /></Thumb>
          </Thumbs>
        </StripGroup>
        <StripGroup $width={292}>
          <StripTitle>215 LIGHT RANGE ADJUSTER ELECTRIC<EditIcon /></StripTitle>
          <Thumbs><Thumb aria-label="Light range adjuster"><RangeThumb /></Thumb></Thumbs>
        </StripGroup>
        <StripGroup $width={200}>
          <StripTitle>220 REAR ILLUMINATION<EditIcon /></StripTitle>
          <Thumbs><Thumb aria-label="Rear illumination"><RearThumb /></Thumb></Thumbs>
        </StripGroup>
        <StripGroup $width={420}>
          <StripTitle>287 BELT LOCKING RETRACTOR, AIRBAG AND SIDEBAG</StripTitle>
          <Thumbs><Thumb aria-label="Belt locking retractor"><BeltThumb /></Thumb></Thumbs>
        </StripGroup>
      </Strip>
      <StripScroll><StripHandle /></StripScroll>
    </Page>
  );
}
